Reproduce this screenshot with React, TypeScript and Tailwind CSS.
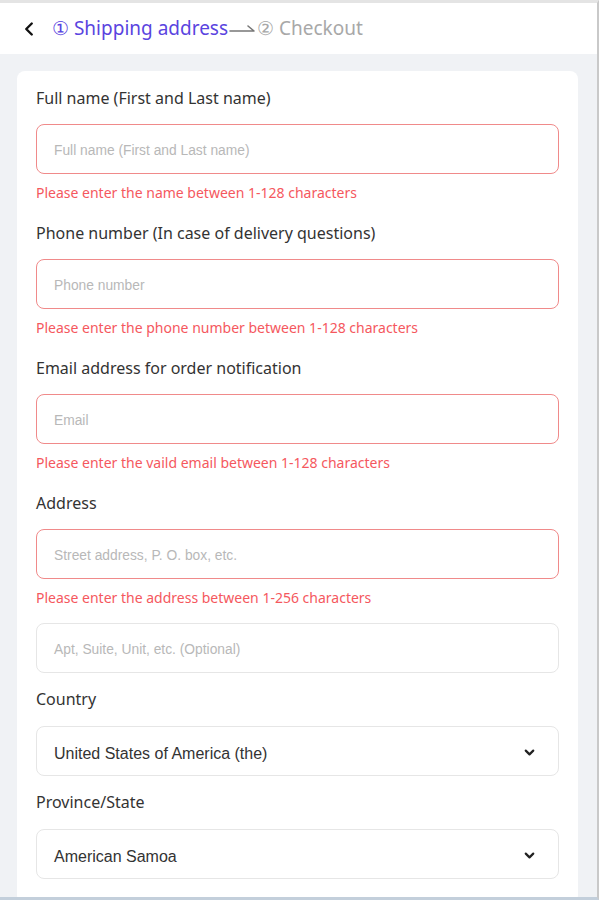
import React from 'react';
import { ChevronLeft, ChevronDown } from 'lucide-react';

const labelFont = { fontFamily: '"Noto Sans", "Liberation Sans", sans-serif' };
const arial = { fontFamily: '"Liberation Sans", Arial, sans-serif' };

type FieldProps = {
  label?: string;
  placeholder: string;
  error?: string;
};

const Field: React.FC<FieldProps> = ({ label, placeholder, error }) => (
  <div className="flex flex-col">
    {label && <label className="text-[16px] leading-6 text-[#333] mb-[14px]">{label}</label>}
    <div
      className={`h-[50px] rounded-lg border flex items-center px-[17px] pt-[5px] text-[13.8px] text-[#b8b8b8] ${
        error ? 'border-[#f08a8a]' : 'border-[#e6e6e6]'
      }`}
      style={arial}
    >
      {placeholder}
    </div>
    {error && <p className="text-[14px] leading-[18px] text-[#f5585e] mt-[10px]">{error}</p>}
  </div>
);

const SelectField: React.FC<{ label: string; value: string }> = ({ label, value }) => (
  <div className="flex flex-col">
    <label className="text-[16px] leading-6 text-[#333] mb-[15px]">{label}</label>
    <div className="h-[50px] rounded-lg border border-[#e6e6e6] flex items-center justify-between pl-[17px] pr-[21px] pt-[5px]">
      <span className="text-[16px] text-[#333]" style={arial}>{value}</span>
      <ChevronDown size={15} strokeWidth={3.5} className="text-[#222] -mt-[2px]" />
    </div>
  </div>
);

export default function App() {
  return (
    <div className="w-[599px] h-[900px] overflow-hidden bg-[#f0f2f5] border-t-[3px] border-t-[#e4e4e4] border-r-2 border-r-[#c9c9c9] border-b-[3px] border-b-[#c3cfdb]" style={labelFont}>
      {/* Header */}
      <div className="h-[51px] bg-white flex items-center pl-[18px]">
        <ChevronLeft size={22} strokeWidth={2.6} className="text-[#111]" />
        <div className="flex items-center ml-[12px] text-[19px]">
          <span className="text-[#5a44e0]">① Shipping address</span>
          <svg width="27" height="12" viewBox="0 0 27 12" className="mx-[1px] mt-[1px]">
            <path d="M1 8 H25 L19 3" fill="none" stroke="#777" strokeWidth="1.6" strokeLinecap="round" strokeLinejoin="round" />
          </svg>
          <span className="text-[#a8a8a8]">② Checkout</span>
        </div>
      </div>

      {/* Form card */}
      <div className="ml-[17px] mt-[17px] mr-[19px] bg-white rounded-lg px-[19px] pt-[15px] pb-6 flex flex-col">
        <Field
          label="Full name (First and Last name)"
          placeholder="Full name (First and Last name)"
          error="Please enter the name between 1-128 characters"
        />
        <div className="h-[19px]" />
        <Field
          label="Phone number (In case of delivery questions)"
          placeholder="Phone number"
          error="Please enter the phone number between 1-128 characters"
        />
        <div className="h-[19px]" />
        <Field
          label="Email address for order notification"
          placeholder="Email"
          error="Please enter the vaild email between 1-128 characters"
        />
        <div className="h-[19px]" />
        <Field
          label="Address"
          placeholder="Street address, P. O. box, etc."
          error="Please enter the address between 1-256 characters"
        />
        <div className="h-[16px]" />
        <Field placeholder="Apt, Suite, Unit, etc. (Optional)" />
        <div className="h-[14px]" />
        <SelectField label="Country" value="United States of America (the)" />
        <div className="h-[14px]" />
        <SelectField label="Province/State" value="American Samoa" />
      </div>
    </div>
  );
}
